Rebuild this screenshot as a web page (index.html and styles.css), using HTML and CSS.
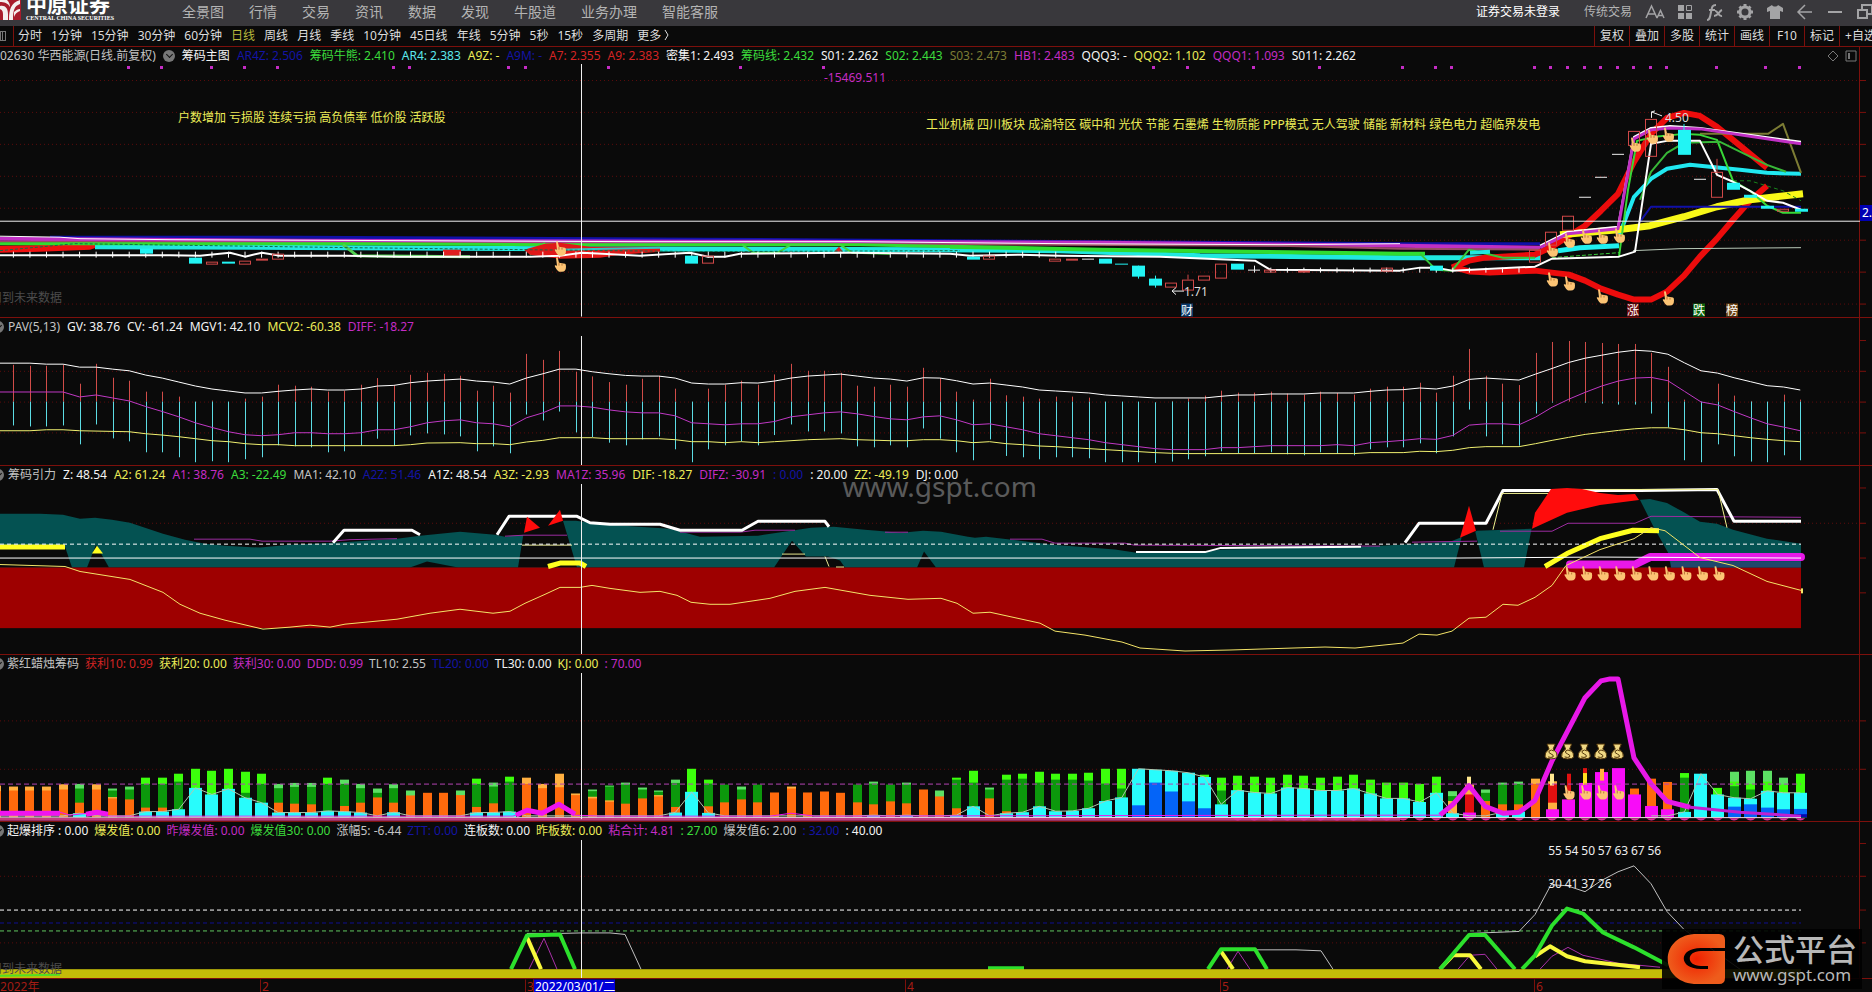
FILE: index.html
```html
<!DOCTYPE html>
<html lang="zh-CN">
<head>
	<meta charset="utf-8"/>
	<title>中原证券 - 华西能源</title>
	<link rel="stylesheet" href="styles.css">
</head>
<body>
	<header class="top">
		<div class="logo">
			<svg class="logo-mark" width="21" height="22" viewBox="0 0 21 22">
				<rect width="21" height="20" fill="#a81c2c"/>
				<path d="M0 6C5 5 8 8 8 14V20H3V15C3 11 2 10 0 9Z M9 20C9 9 11 3 20 0V4C14 6 13 11 13 20Z M0 0H7C9 2 10 4 10 7C8 3 4 2 0 2Z M14 12C16 10 18 9 20 9V11C17 12 15 14 14 17Z" fill="#f4eeee"/>
			</svg>
			<div class="logo-text">
				<strong>中原证券</strong>
				<small>CENTRAL CHINA SECURITIES</small>
			</div>
		</div>
		<nav class="menu">
			<button>全景图</button>
			<button>行情</button>
			<button>交易</button>
			<button>资讯</button>
			<button>数据</button>
			<button>发现</button>
			<button>牛股道</button>
			<button>业务办理</button>
			<button>智能客服</button>
		</nav>
		<div class="tools">
			<button class="login">证券交易未登录</button>
			<button class="trade">传统交易</button>
			<button class="ico" aria-label="字体"><svg width="20" height="18" viewBox="0 0 20 18"><path d="M1 15L6.500 3L12 15M3 11H10M12 15L15.500 7.500L19 15M13 12.500H18" stroke-width="1.500"/></svg></button>
			<button class="ico" aria-label="布局"><svg width="20" height="18" viewBox="0 0 20 18"><path class="fill" d="M3 2H9V8H3ZM3 10H9V16H3ZM11 10H17V16H11Z"/><path d="M11.500 2.500H16.500V7.500H11.500Z"/></svg></button>
			<button class="ico" aria-label="公式"><svg width="20" height="18" viewBox="0 0 20 18"><path d="M2 17C5 17 5 14 6 9C7 4 7 2 11 2M4 7H10M10 8C13 7 13 14 17 13M17 7C14 8 13 13 9 13" stroke-width="2"/></svg></button>
			<button class="ico" aria-label="设置"><svg width="20" height="18" viewBox="0 0 20 18"><circle cx="10" cy="9" r="5" stroke-width="3"/><path d="M10 1V4M10 14V17M2 9H5M15 9H18M4.500 3.500L6.500 5.500M13.500 12.500L15.500 14.500M4.500 14.500L6.500 12.500M13.500 5.500L15.500 3.500" stroke-width="3"/></svg></button>
			<button class="ico" aria-label="皮肤"><svg width="20" height="18" viewBox="0 0 20 18"><path class="fill" d="M7 2C8 4 12 4 13 2L18 5V9L15 8V16H5V8L2 9V5Z"/></svg></button>
			<button class="ico" aria-label="返回"><svg width="20" height="18" viewBox="0 0 20 18"><path d="M17 9H3M10 2L3 9L10 16" stroke-width="1.500"/></svg></button>
			<button class="ico" aria-label="最小化"><svg width="20" height="18" viewBox="0 0 20 18"><path d="M3 9H17" stroke-width="2"/></svg></button>
			<button class="ico" aria-label="还原"><svg width="20" height="18" viewBox="0 0 20 18"><path d="M3 7H12V15H3ZM7 7V2H17V11H12" stroke-width="2"/></svg></button>
		</div>
	</header>

	<div class="bar">
		<button class="side" aria-label="侧栏"><i></i></button>
		<div class="period">
			<button>分时</button>
			<button>1分钟</button>
			<button>15分钟</button>
			<button>30分钟</button>
			<button>60分钟</button>
			<button class="active">日线</button>
			<button>周线</button>
			<button>月线</button>
			<button>季线</button>
			<button>10分钟</button>
			<button>45日线</button>
			<button>年线</button>
			<button>5分钟</button>
			<button>5秒</button>
			<button>15秒</button>
			<button>多周期</button>
			<button>更多 <svg width="5" height="10" viewBox="0 0 5 10"><path d="M1 0L4 5L1 10" fill="none" stroke="#ddd"/></svg></button>
		</div>
		<div class="func">
			<button>复权</button>
			<button>叠加</button>
			<button>多股</button>
			<button>统计</button>
			<button>画线</button>
			<button>F10</button>
			<button>标记</button>
			<button>+自选</button>
		</div>
	</div>

	<main class="panels">
		<section class="panel p1">
			<div class="info">
				<span class="gy">02630 华西能源(日线.前复权)</span>
				<i class="drop"></i>
				<span class="w">筹码主图</span>
				<span class="b">AR4Z: 2.506</span>
				<span class="g">筹码牛熊: 2.410</span>
				<span class="c">AR4: 2.383</span>
				<span class="y">A9Z: -</span>
				<span class="b">A9M: -</span>
				<span class="r">A7: 2.355</span>
				<span class="r">A9: 2.383</span>
				<span class="w">密集1: 2.493</span>
				<span class="g">筹码线: 2.432</span>
				<span class="w">S01: 2.262</span>
				<span class="g">S02: 2.443</span>
				<span class="o">S03: 2.473</span>
				<span class="m">HB1: 2.483</span>
				<span class="w">QQQ3: -</span>
				<span class="y">QQQ2: 1.102</span>
				<span class="m">QQQ1: 1.093</span>
				<span class="w">S011: 2.262</span>
				<svg class="corner" width="30" height="12" viewBox="0 0 30 12"><path d="M6 1L11 6L6 11L1 6ZM19 1H29V11H19Z" fill="none" stroke="#777"/><path d="M21 3H23V9H21Z" fill="#777"/></svg>
			</div>
			<div class="plot"><svg id="main" viewBox="0 64 1872 253" preserveAspectRatio="none"></svg></div>
		</section>

		<section class="panel p2">
			<div class="info">
				<i class="drop half"></i>
				<span class="gy">PAV(5,13)</span>
				<span class="w">GV: 38.76</span>
				<span class="w">CV: -61.24</span>
				<span class="w">MGV1: 42.10</span>
				<span class="y">MCV2: -60.38</span>
				<span class="m">DIFF: -18.27</span>
			</div>
			<div class="plot"><svg id="pav" viewBox="0 335 1872 130" preserveAspectRatio="none"></svg></div>
		</section>

		<section class="panel p3">
			<div class="info">
				<i class="drop half"></i>
				<span class="gy">筹码引力</span>
				<span class="w">Z: 48.54</span>
				<span class="y">A2: 61.24</span>
				<span class="m">A1: 38.76</span>
				<span class="g">A3: -22.49</span>
				<span class="gy">MA1: 42.10</span>
				<span class="b">A2Z: 51.46</span>
				<span class="w">A1Z: 48.54</span>
				<span class="y">A3Z: -2.93</span>
				<span class="m">MA1Z: 35.96</span>
				<span class="y">DIF: -18.27</span>
				<span class="m">DIFZ: -30.91</span>
				<span class="b">: 0.00</span>
				<span class="w">: 20.00</span>
				<span class="y">ZZ: -49.19</span>
				<span class="w">DJ: 0.00</span>
			</div>
			<div class="plot"><svg id="force" viewBox="0 483 1872 171" preserveAspectRatio="none"></svg></div>
			<div class="mark">www.gspt.com</div>
		</section>

		<section class="panel p4">
			<div class="info">
				<i class="drop half"></i>
				<span class="gy">紫红蜡烛筹码</span>
				<span class="r">获利10: 0.99</span>
				<span class="y">获利20: 0.00</span>
				<span class="m">获利30: 0.00</span>
				<span class="m">DDD: 0.99</span>
				<span class="gy">TL10: 2.55</span>
				<span class="b">TL20: 0.00</span>
				<span class="w">TL30: 0.00</span>
				<span class="y">KJ: 0.00</span>
				<span class="m">: 70.00</span>
			</div>
			<div class="plot"><svg id="chip" viewBox="0 672 1872 150" preserveAspectRatio="none"></svg></div>
		</section>

		<section class="panel p5">
			<div class="info">
				<i class="drop half"></i>
				<span class="w">起爆排序 : 0.00</span>
				<span class="y">爆发值: 0.00</span>
				<span class="m">昨爆发值: 0.00</span>
				<span class="g">爆发值30: 0.00</span>
				<span class="gy">涨幅5: -6.44</span>
				<span class="b">ZTT: 0.00</span>
				<span class="w">连板数: 0.00</span>
				<span class="y">昨板数: 0.00</span>
				<span class="m">粘合计: 4.81</span>
				<span class="g">: 27.00</span>
				<span class="gy">爆发值6: 2.00</span>
				<span class="b">: 32.00</span>
				<span class="w">: 40.00</span>
			</div>
			<div class="plot"><svg id="burst" viewBox="0 840 1872 139" preserveAspectRatio="none"></svg></div>
		</section>
		<div class="dates" id="dates"></div>
	</main>

	<aside class="brand">
		<svg width="60" height="52" viewBox="0 0 60 52">
			<defs><radialGradient id="gb"><stop offset="0" stop-color="#f02000"/><stop offset="1" stop-color="#ee5c1c"/></radialGradient></defs>
			<path d="M28 1H53Q59 1 59 7V15H35C12 15 12 36 35 36H42V33H35C20 33 20 18 35 18H59V45Q59 51 53 51H28C-7 48 -7 4 28 1Z" fill="url(#gb)"/>
		</svg>
		<div>
			<strong>公式平台</strong>
			<span>www.gspt.com</span>
		</div>
	</aside>

<script src="chart.js"></script>
</body>
</html>
```
FILE: styles.css
```css
*{margin: 0;padding: 0;box-sizing: border-box;}
body{
	height: 100vh;
	display: flex;
	flex-direction: column;
	overflow: hidden;
	background: #0a0a0a;
	color: #ddd;
	font: 12px/18px "Noto Sans","Noto Sans CJK SC",sans-serif;
}
button{
	background: none;
	border: 0;
	color: inherit;
	font: inherit;
	white-space: nowrap;
	cursor: pointer;
}

/* 顶部菜单 */
.top{
	display: flex;
	align-items: center;
	height: 26px;
	flex: none;
	background: #39383c;
	overflow: hidden;
}
.logo{
	display: flex;
	gap: 5px;
	width: 182px;
	height: 26px;
}
.logo-text strong{
	display: block;
	height: 15px;
	font-size: 21px;
	line-height: 9px;
	color: #fff;
}
.logo-text small{
	display: block;
	font: bold 6px/6px "Liberation Serif",serif;
	color: #fff;
	white-space: nowrap;
}
.menu{
	display: flex;
	gap: 25px;
	margin-top: -3px;
	font-size: 14px;
	color: #b4b4b4;
}
.tools{
	display: flex;
	align-items: center;
	gap: 10px;
	margin: -3px -3px 0 auto;
}
.login{color: #fff;margin-right: 14px;}
.trade{color: #b4b4b4;margin-right: 3px;}
.ico{height: 18px;}
.ico svg{
	display: block;
	fill: none;
	stroke: #a4a4a6;
}
.ico .fill{fill: #a4a4a6;stroke: none;}

/* 周期栏 */
.bar{
	display: flex;
	height: 21px;
	flex: none;
	border-bottom: 1px solid #7c100c;
}
.side{
	width: 14px;
	border-right: 1px solid #7c100c;
	text-align: left;
}
.side i{
	display: block;
	width: 6px;
	height: 10px;
	border: 1px solid #777;
	border-left: 3px double #777;
}
.period{
	display: flex;
	gap: 9px;
	padding-left: 4px;
}
.period .active{color: #b8b83c;}
.func{
	display: flex;
	margin-left: auto;
	margin-right: -9px;
}
.func button{
	width: 35px;
	border-left: 1px solid #7c100c;
}
.func button:last-child{width: 42px;}

/* 图表区 */
.panels{
	flex: 1;
	display: flex;
	flex-direction: column;
	min-height: 0;
}
.panel{
	position: relative;
	display: flex;
	flex-direction: column;
	min-height: 0;
	border-bottom: 1px solid #7c100c;
	background: linear-gradient(#7c100c,#7c100c) right 12px top / 1px 100% no-repeat;
}
.p1{flex: 271 1 0;}
.p2{flex: 148 1 0;}
.p3{flex: 189 1 0;}
.p4{flex: 167 1 0;}
.p5{flex: 157 1 0;}
.info{
	display: flex;
	align-items: center;
	gap: 7px;
	height: 18px;
	flex: none;
	white-space: nowrap;
}
.p1 .info{height: 17px;}
.p4 .info,.p5 .info{gap: 6px;}
.corner{margin-left: auto;margin-right: 15px;}
.drop{
	position: relative;
	width: 12px;
	height: 12px;
	border-radius: 50%;
	background: #777;
}
.drop::after{
	content: "";
	position: absolute;
	left: 4px;
	top: 2px;
	width: 4px;
	height: 4px;
	border: solid #111;
	border-width: 0 1px 1px 0;
	transform: rotate(45deg);
}
.drop.half{margin: 0 -3px 0 -8px;}
.w{color: #f4f4f4;}
.gy{color: #c4c4c4;}
.b{color: #1414a4;}
.g{color: #3cdc3c;}
.c{color: #5ce8ec;}
.y{color: #ecec58;}
.r{color: #d42424;}
.o{color: #7c7c34;}
.m{color: #c42cc4;}

.plot{
	position: relative;
	flex: 1;
	min-height: 0;
}
.plot svg{
	position: absolute;
	left: 0;
	top: 0;
	width: 100%;
	height: 100%;
}
.plot path,.plot line{vector-effect: non-scaling-stroke;}
.lab,.dates span{
	position: absolute;
	transform: translateY(-50%);
	white-space: nowrap;
	line-height: 13px;
}
.lab.mid{transform: translate(-50%,-50%);}
.lab.gray{color: #4c4c4c;}
.lab.num{color: #eee;}
.lab.tag{color: #fff;}
.lab.cai{background: #0c3c6c;}
.lab.zhang{background: #6c0c0c;}
.lab.die{background: #0c640c;}
.lab.bang{background: #6c4414;}
.lab.price{background: #0000b4;color: #fff;line-height: 16px;padding: 0 2px;}

.mark{
	position: absolute;
	left: 45%;
	top: 3px;
	font-size: 28px;
	line-height: 34px;
	color: #909090;
	opacity: .6;
}

.dates{
	position: relative;
	flex: none;
	height: 13px;
	overflow: hidden;
	color: #a41c14;
}
.dates span{top: 50%;border-left: 1px solid #7c100c;padding-left: 1px;}
.dates span.now{background: #0000d8;color: #fff;}

.brand{
	position: absolute;
	right: 10px;
	bottom: 3px;
	display: flex;
	align-items: center;
	gap: 7px;
	width: 200px;
	height: 60px;
	padding-left: 4px;
	background: rgba(0,0,0,.9);
	color: #b8b8b8;
	white-space: nowrap;
}
.brand strong{
	display: block;
	font-size: 31px;
	line-height: 32px;
	font-weight: 500;
}
.brand span{
	display: block;
	font-size: 17px;
	line-height: 20px;
}
```
FILE: chart.js
```js
var NS = 'http://www.w3.org/2000/svg';

//第i根K线的x坐标
function X(i){
	return 13.4 + i * 16.545;
}
function add(svg, tag, attr){
	var el = document.createElementNS(NS, tag);
	for(var k in attr){
		el.setAttribute(k, attr[k]);
	}
	svg.appendChild(el);
	return el;
}
//折线 pts: "x,y x,y"
function line(svg, pts, color, w, dash){
	var a = {d:'M' + pts.trim().split(/\s+/).join('L'), fill:'none', stroke:color, 'stroke-width':w || 1, 'stroke-linejoin':'round'};
	if(dash) a['stroke-dasharray'] = dash;
	return add(svg, 'path', a);
}
function area(svg, pts, color){
	return add(svg, 'path', {d:'M' + pts.trim().split(/\s+/).join('L') + 'Z', fill:color});
}
function rect(svg, x, y, w, h, color){
	return add(svg, 'rect', {x:x, y:y, width:w, height:h, fill:color});
}
//每根K线一个值, 序列为 "i:v", 1px = 3个单位
function series(svg, str, y0, color){
	var pts = str.trim().split(/\s+/).map(function(s){
		var p = s.split(':');
		return X(+p[0]) + ',' + (y0 + p[1] / 3);
	});
	line(svg, pts.join(' '), color, 1);
}
function grid(svg, ys, ticks){
	ys.forEach(function(y){
		line(svg, '0,' + y + ' 1859,' + y, '#5c0c0c', 1, '1 3');
	});
	ys.concat(ticks || []).forEach(function(y){
		line(svg, '1860,' + y + ' 1866,' + y, '#7c100c', 1);
	});
}
function cross(svg, y1, y2){
	line(svg, '581.5,' + y1 + ' 581.5,' + y2, '#f0f0f0', 1);
}
function label(svg, x, y, text, cls){
	var vb = svg.viewBox.baseVal;
	var s = document.createElement('span');
	s.className = 'lab ' + (cls || '');
	s.textContent = text;
	s.style.left = x / vb.width * 100 + '%';
	s.style.top = (y - vb.y) / vb.height * 100 + '%';
	svg.parentNode.appendChild(s);
}
function hand(svg, x, y){
	var g = add(svg, 'g', {transform:'translate(' + (x - 5) + ',' + (y - 7) + ')'});
	add(g, 'path', {d:'M1 0Q3 -1 3 1L4 5L10 6Q11 6 11 9Q11 14 7 14H4Q2 13 0 9Q-1 7 2 8Z', fill:'#fcc474'});
	add(g, 'path', {d:'M4 5V8M7 6V8', fill:'none', stroke:'#b87838'});
}
function bag(svg, x, y){
	var g = add(svg, 'g', {transform:'translate(' + x + ',' + y + ')'});
	add(g, 'path', {d:'M-4 -8H4L2 -3Q7 1 6 5Q5 7 0 7Q-5 7 -6 5Q-7 1 -2 -3Z', fill:'#f0d884', stroke:'#54380c'});
	add(g, 'path', {d:'M3 -1Q0 -3 -2 -1Q-3 1 0 2Q3 3 2 5Q0 6 -3 5', fill:'none', stroke:'#54380c'});
}
//K线 空心为涨, 实心为跌
function candle(svg, x, y1, y2, up){
	if(up){
		add(svg, 'rect', {x:x - 5.5, y:y1 + .5, width:11, height:Math.max(1, y2 - y1 - 1), fill:'none', stroke:'#d04848'});
	}else{
		rect(svg, x - 6, y1, 13, y2 - y1, '#22f4f4');
	}
}

/*主图*/
(function(){
	var s = document.getElementById('main');
	grid(s, [80.5,112.5,144.5,176.5,208.5,240.5,272.5,304.5]);
	[128,161,211,244,277,393,409,508,525,608,740,823,1153,1187,1253,1319,1402,1435,1451,1534,1550,1567,1584,1600,1617,1633,1650,1666,1716,1765,1799].forEach(function(x){
		rect(s, x - 1, 66, 3, 3, '#c42cc4');
	});
	//均线带
	line(s, '50,237.5 300,237.5 700,239.5 1100,242 1400,244 1540,244', '#1010a8', 3);
	line(s, '0,239 300,241 700,242 1100,243 1400,246 1540,248', '#c030c4', 4);
	line(s, '0,242 300,243 700,244 1060,245 1280,246 1400,249 1540,250', '#9c4c64', 2);
	area(s, '0,246 60,245 105,245 90,250 40,252 0,253', '#f01010');
	line(s, '95,247 350,248 560,249 940,250 1060,251 1200,256 1400,258 1540,258', '#20e8e0', 5);
	line(s, '0,244 350,244 560,245 860,245 960,247', '#30dc30', 3);
	line(s, '950,247 1100,250 1250,252 1400,254 1425,254', '#30dc30', 4);
	line(s, '343,245 357,256 470,257', '#50d050', 3);
	line(s, '530,255 545,243', '#40d840', 2);
	line(s, '742,245 753,253 778,253 791,245 840,245 852,253 890,254', '#40d840', 2);
	area(s, '524,250 545,244 560,243 590,247 660,247 660,252 620,255 600,258 560,259 530,255', '#e01818');
	line(s, '560,250 605,249 660,248', '#30c8c8', 2);
	rect(s, 443, 250, 18, 6, '#e02020');
	area(s, '834,252 839,247 843,252', '#e02020');
	line(s, '0,236.5 60,237.5 80,239 170,240 410,241 640,242 860,242 1060,244 1280,245 1400,244', '#fff', 1);
	line(s, '0,251 75,244 350,248 700,252 960,251', '#106c48', 1, '3 2');
	//起涨后
	line(s, '1452,268 1469,261 1485,258 1535,255 1552,247 1569,236 1585,226 1601,211 1618,194 1634,162 1651,134 1667,118 1684,113 1700,116 1717,127 1733,140 1750,154 1767,168', '#ec0c0c', 6);
	line(s, '1452,267 1470,272 1490,273 1535,271 1552,273 1569,275 1585,281 1601,289 1618,295 1634,300 1651,300 1667,292 1684,276 1700,257 1717,239 1733,220 1750,201 1767,186', '#ec0c0c', 6);
	line(s, '1420,254 1436,270 1452,271 1469,250 1503,258 1535,258', '#38c838', 2);
	line(s, '1470,253 1490,252', '#20e8e0', 4);
	line(s, '1633,251 1680,249 1801,248', '#b8c8b8', 1);
	line(s, '1552,258 1619,253', '#38c838', 1, '4 2');
	line(s, '1558,251 1580,248 1619,246', '#20f0f0', 5);
	line(s, '1619,236 1634,197 1651,179 1667,169 1690,165 1720,168 1740,170 1767,173 1801,174', '#20e8f0', 4);
	line(s, '1560,235 1618,230 1650,226 1684,217 1717,207 1750,200 1803,194', '#f8f818', 7);
	line(s, '1640,222 1651,207 1801,207', '#1010a8', 2);
	line(s, '1700,134 1768,134 1783,124 1801,173', '#7c7c34', 2);
	line(s, '1619,257 1628,190 1637,141 1655,137 1684,134 1700,135 1717,140 1733,181 1750,191 1767,206 1783,213 1801,213', '#38d838', 2);
	line(s, '1640,200 1651,172 1667,153 1684,143 1720,142 1767,165 1786,172', '#38b838', 2);
	line(s, '1733,181 1750,181 1783,191 1801,201', '#18841c', 1, '4 3');
	line(s, '1540,246 1568,232 1618,227 1634,137 1651,128 1670,126 1700,128 1801,142', '#fff', 2);
	line(s, '1540,248 1568,234 1618,229 1634,139 1651,130 1670,128 1700,129 1801,144', '#c030c4', 3);
	line(s, '0,255.5 170,255.5 200,256 230,253 245,257 262,253 280,256 345,256 400,257 530,257 560,256 582,253 640,256 690,253 708,257 725,257 740,254 850,253 950,254 970,256 1020,255 1060,256 1160,257 1255,261 1270,270 1400,271 1420,268 1436,268 1452,271 1535,267 1552,259 1619,257 1635,252 1651,144 1667,141 1700,141 1717,175 1733,182 1750,191 1767,201 1783,203 1801,210', '#fff', 2);
	for(var i = 0; i < 64; i++){
		line(s, X(i) + ',252 ' + X(i) + ',258', '#fff', 1);
	}
	for(i = 76; i < 92; i++){
		line(s, X(i) + ',268 ' + X(i) + ',273', '#fff', 1);
	}
	//K线
	[[146,249,254,0],[195,258,264,0],[212,262,265,1],[228,262,264,0],[245,261,265,1],[262,259,261,1],[278,254,260,1],[691,256,264,0],[708,256,264,1],
	[973,257,260,0],[989,256,260,1],[1055,259,262,1],[1072,259,261,1],[1105,259,264,0],[1138,266,277,0],[1155,279,286,0],[1171,283,288,1],[1188,280,291,1],
	[1204,276,281,1],[1221,264,279,1],[1237,264,270,0],[1270,270,273,1],[1304,271,273,1],[1387,268,272,1],[1436,266,271,0],[1535,250,263,1],[1551,232,246,1],[1568,216,231,1],[1634,131,146,1],[1651,119,157,1],
	[1684,130,155,0],[1717,172,198,1],[1733,183,190,0],[1750,195,198,0],[1767,206,209,0],[1783,209,212,1],[1801,209,212,0]].forEach(function(k){
		candle(s, k[0], k[1], k[2], k[3]);
	});
	line(s, '1138.5,266 1138.5,279', '#22f4f4', 1);
	line(s, '1155.5,276 1155.5,288', '#22f4f4', 1);
	line(s, '1717,159 1717,172', '#d04848', 1);
	line(s, '1188,275 1188,280', '#d04848', 1);
	line(s, '1684,124 1684,131', '#22f4f4', 1);
	['1612,154.5 1624,154.5','1595,177.5 1607,177.5','1579,197.5 1591,197.5','1694,179.5 1706,179.5','1082,259.5 1094,259.5','1248,270.5 1260,270.5','1254.5,266 1254.5,273','1651.5,112 1662,116','1651.5,118 1651.5,112 1655,111','1172,291.5 1184,291.5','1176,288 1172,291.5 1176,295'].forEach(function(p){
		line(s, p, '#eee', 1);
	});
	line(s, '1115,264.5 1128,264.5', '#22f4f4', 1);
	[[560,249],[560,265],[1552,250],[1569,241],[1586,237],[1602,237],[1619,236],[1635,145],[1652,137],[1668,135],[1552,280],[1569,284],[1602,297],[1668,299]].forEach(function(p){
		hand(s, p[0], p[1]);
	});
	line(s, '0,221.5 1860,221.5', '#f0f0f0', 1);
	cross(s, 64, 317);

	label(s, 824, 77, '-15469.511', 'm');
	label(s, 178, 117, '户数增加 亏损股 连续亏损 高负债率 低价股 活跃股', 'y');
	label(s, 926, 124, '工业机械 四川板块 成渝特区 碳中和 光伏 节能 石墨烯 生物质能 PPP模式 无人驾驶 储能 新材料 绿色电力 超临界发电', 'y');
	label(s, 1665, 117, '4.50');
	label(s, 1184, 291, '1.71');
	label(s, 1181, 310, '财', 'tag cai');
	label(s, 1627, 310, '涨', 'tag zhang');
	label(s, 1693, 310, '跌', 'tag die');
	label(s, 1726, 310, '榜', 'tag bang');
	label(s, -10, 297, '用到未来数据', 'gray');
	label(s, 1860, 213, '2.8', 'price');
})();

/*PAV*/
(function(){
	var s = document.getElementById('pav');
	grid(s, [370.5,401.5,432.5], [339.5]);
	var top = [432,435,435,432,489,429,471,480,513,513,528,543,540,543,534,528,492,495,498,513,510,492,472,494,462,456,459,465,510,495,516,399,417,390,453,467,484,492,474,465,504,543,
	504,492,480,492,461,429,450,450,456,495,498,492,498,441,472,513,537,474,524,528,534,528,528,531,543,543,543,545,541,534,525,510,516,516,513,519,522,513,517,522,504,498,
	498,486,516,465,384,465,489,493,396,363,360,363,366,369,369,396,438,537,543,489,525,541,543,522,537];
	top.forEach(function(v, i){
		var x = Math.round(X(i)), y = 220 + v / 3, mid = 401;
		if(y < mid) rect(s, x, y, 1, mid - y, '#d04c48');
		if(y + 61 > mid) rect(s, x, Math.max(y, mid), 1, y + 61 - Math.max(y, mid), '#5cdce4');
	});
	series(s, '-1:427 1:427 2:430 3:430 4:439 5:439 6:445 7:450 8:463 9:472 10:484 11:496 12:505 13:511 14:517 15:517 16:512 17:508 18:505 19:508 20:508 21:505 22:496 23:494 24:486 25:481 26:478 27:475 28:481 29:484 30:490 31:472 32:459 33:445 34:445 35:453 36:459 37:464 38:466 39:466 40:472 41:487 42:490 43:490 44:486 45:487 46:481 47:472 48:466 49:463 50:460 51:466 52:472 53:475 54:481 55:471 56:472 57:480 58:490 59:487 60:493 61:499 62:508 63:511 64:514 65:517 66:523 67:526 68:529 69:532 72:532 73:527 74:523 75:523 76:520 78:520 79:517 81:517 82:512 83:508 84:507 85:502 86:505 87:496 88:476 89:472 90:475 91:478 92:460 93:443 94:425 95:412 96:403 97:394 98:388 99:391 100:400 101:426 102:450 103:457 104:471 105:483 106:495 107:499 108:508', 220, '#fff');
	series(s, '-1:514 3:514 4:529 5:523 6:532 7:541 8:558 9:573 10:589 11:607 12:621 13:634 14:643 15:646 16:643 17:637 18:637 19:640 20:640 21:637 22:628 23:628 24:619 25:607 26:601 27:598 28:607 29:610 30:619 31:592 32:577 33:556 34:556 35:560 36:568 37:574 38:577 39:577 40:586 41:607 42:610 43:613 44:610 45:610 46:603 47:589 48:583 49:577 50:574 51:580 52:588 53:595 54:598 55:589 56:586 57:598 58:613 59:610 60:619 61:628 62:640 63:646 64:652 65:658 66:667 67:673 68:679 69:685 70:688 72:688 73:682 74:682 75:679 76:676 79:676 80:673 81:676 82:667 83:664 84:660 85:655 86:657 87:645 88:614 89:610 90:610 91:613 92:590 93:560 94:536 95:515 96:496 97:481 98:472 99:470 100:480 101:512 102:544 103:553 104:573 105:592 106:610 107:620 108:631', 220, '#c038c4');
	series(s, '-1:631 1:631 2:628 3:628 4:631 7:634 8:640 9:644 10:649 11:655 12:661 13:664 14:670 15:673 16:673 17:676 23:676 24:673 25:668 27:667 28:670 29:670 30:673 31:665 32:660 33:652 35:652 36:655 39:655 40:658 41:664 42:664 43:667 44:664 45:667 46:664 47:661 48:658 50:655 51:658 53:661 54:661 55:658 56:658 57:661 58:667 59:664 60:670 61:673 62:677 63:679 64:682 65:685 66:688 67:691 68:694 69:697 70:699 71:700 81:700 82:697 84:697 85:693 86:694 87:690 88:682 89:679 91:679 92:670 93:660 94:651 95:642 96:636 97:630 98:625 99:622 100:622 101:628 102:637 103:640 104:646 105:652 106:657 107:661 108:664', 220, '#f0f070');
	cross(s, 335, 465);
})();

/*筹码引力*/
(function(){
	var s = document.getElementById('force'), bg = '#0a0a0a';
	grid(s, [522.5], [487,557.5,592.5]);
	area(s, '0,513 40,513 63,514 80,518 95,517 112,519 130,522 145,527 163,533 185,539 205,543 225,545 260,547 290,544 335,542 397,538 420,535 460,531 495,534 505,536 563,520 576,520 598,523 638,526 670,528 700,536 758,535 791,530 811,527 834,526 865,529 901,532 923,530 941,531 968,536 975,537 986,536 1012,539 1053,544 1115,549 1135,552 1195,552 1222,549 1361,546 1400,544 1450,541 1460,537 1471,533 1477,530 1531,528 1638,499 1650,498 1667,502 1683,511 1700,521 1717,523 1733,529 1767,538 1801,543 1801,567 0,567', '#045252');
	area(s, '0,546 65,546 72,567 0,567', bg);
	area(s, '87,567 96,544 109,567', bg);
	area(s, '505,536 540,515 563,520 541,530 524,534', bg);
	area(s, '518,567 524,530 541,528 563,520 577,567', bg);
	area(s, '410,567 427,561 458,567', bg);
	area(s, '774,567 792,540 806,556 828,556 840,560 845,567', bg);
	area(s, '917,567 924,551 936,567', bg);
	area(s, '1454,567 1462,535 1475,530 1484,567', bg);
	area(s, '1524,567 1532,526 1590,500 1639,497 1653,525 1668,552 1671,567', bg);
	rect(s, 0, 567, 1801, 61, '#9e0000');
	line(s, '194,538.5 250,538.5 262,540.5 330,540.5 350,539 397,538', '#9c2ca0', 1);
	line(s, '505,535.5 524,534.5 567,534.5', '#9c2ca0', 1);
	line(s, '680,531.5 740,531.5 755,529.5 795,529.5', '#9c2ca0', 1);
	line(s, '885,531.5 908,531.5', '#9c2ca0', 1);
	line(s, '1010,538.5 1042,538.5 1055,542.5 1125,542.5 1134,544.5 1380,545.5', '#9c2ca0', 1);
	line(s, '1412,541.5 1477,540.5', '#9c2ca0', 1);
	line(s, '1500,530.5 1552,530.5 1568,522.5 1635,522.5 1651,515.5 1801,516.5', '#9c2ca0', 1);
	line(s, '333,542 344,529.5 412,529.5 420,534', '#fff', 3);
	line(s, '497,534 509,515.5 577,515.5 590,522 610,523.5 660,523.5 680,529.5 742,529.5 758,520.5 825,520.5 829,526', '#fff', 3);
	line(s, '1136,551.5 1205,551.5 1220,547.5 1361,546', '#fff', 2);
	line(s, '1405,542 1419,522.5 1486,522.5 1503,489.5 1640,489.5 1717,488.5 1734,520.5 1801,520.5', '#fff', 3);
	line(s, '1493,529 1502,492.5 1550,492.5', '#f0f090', 1);
	line(s, '1573,488.5 1718,488.5 1727,527', '#f0f090', 1);
	area(s, '524,532 527,516 540,527', '#ff0c0c');
	area(s, '548,525 560,509 563,520', '#ff0c0c');
	area(s, '1460,537 1469,505 1476,530', '#ff0c0c');
	area(s, '1532,528 1535,512 1551,488 1567,487 1582,488 1600,492 1618,494 1635,493 1639,499 1600,504 1567,512', '#ff0c0c');
	line(s, '0,546.5 65,546.5', '#ffff20', 5);
	area(s, '92,553 97,545 103,553', '#ffff20');
	line(s, '522,544.5 572,544.5', '#f0f0a0', 1);
	line(s, '782,553.5 805,553.5M825,556L829,566M836,566.5L844,566.5', '#e8e890', 1);
	line(s, '548,566 560,562.5 580,562.5 586,566', '#ffff20', 5);
	line(s, '1545,566 1567,553 1600,538 1633,529.5 1659,530', '#ffff20', 5);
	rect(s, 1671, 561, 130, 6, '#20486c');
	line(s, '1570,564 1635,564 1650,556.5 1801,556.5', '#e818e8', 8).setAttribute('stroke-linecap', 'round');
	line(s, '0,543.5 1801,543.5', '#fff', 1, '4 3');
	line(s, '0,557.5 1455,557.5 1600,556.5 1801,557.5', '#fff', 1);
	line(s, '0,564 65,566 80,571 130,579 163,592 180,604 200,613 225,620 263,629 290,627 310,625 330,627 345,624 397,619 430,613 460,609 493,613 510,611 525,603 545,594 560,587 580,587 592,585 610,588 640,592 660,591 677,595 691,602 710,604 730,604 770,598 795,591 825,587 870,595 908,599 941,598 957,603 973,613 990,612 1040,623 1055,631 1085,635 1122,642 1140,648 1185,651 1230,650 1325,647 1355,648 1403,643 1419,634 1437,635 1452,631 1469,618 1486,617 1503,604 1518,605 1535,597 1552,585 1566,565 1600,549 1634,538 1651,527 1665,530 1700,557 1733,565 1767,581 1801,590', '#f4e468', 1);
	for(var i = 94; i < 104; i++){
		hand(s, X(i) + 1, 573);
	}
	rect(s, 1801, 588, 2, 5, '#f4e468');
	cross(s, 483, 654);
})();

/*紫红蜡烛筹码*/
(function(){
	var s = document.getElementById('chip');
	var colors = {O:'#ff6a0c', A:'#ffb040', G:'#0c980c', L:'#3cff0c', P:'#5ce064', C:'#28fcfc', B:'#0464f8', N:'#0808b0', M:'#f80cf8', R:'#e01010'};
	//从上到下: 颜色+顶部位置
	var bars = ['A408 O425','A411 O423','A411 O423','A411 O423','A404 O420','P403 G417 O460 C492','A404 O420','P417 G423 A443 O447','P411 G420 O450','L384 G403 O475 C487','L384 G403 O475 C487','L372 G396 C480','L357 C415','L363 C435','L357 C418','L366 G430 C445','L372 G403 C460','P403 G416 O460 C490','P400 G412 O463 C490','P400 G412 O465 C490','L384 G403 C485','P390 G403 O470 C487','P403 G416 O460 C490','P417 G430 O444','P404 G416 O460 C489','P423 O438','O430','O430','P423 O437','L387 G403 O473 C490','P399 G411 O462 C490','L381 G396 C487','A384 O403','A403 O416','A372 O413','A432 O437','P420 G425 A442 O447','P408 G411 A453 O457','P399 G405 O463','P414 G420 O447','P423 G427 A437 O441','P390 G400 O473 C490','L357 C427',
	'L390 G402 O471 C491','G405 O459','P411 G420 O450','G405 O459','O429','A411 O417','O429','O426','O430','G405 O459','P396 G402 O465 C498','G405 O456','P399 G405 O462 C498','O420','P423 O441','L384 G390 O477 C498','L363 G399 C471','P414 G420 O447','L375 G390 O486 C492','L372 G387 C489','L366 G399 C471','L372 G390 C486','L372 G390 C485','L369 G393 C477','L357 G402 C455','L357 G417 C444','C357 B468','C360 B399','C363 B426','C369 B456','L375 C382 B477','L384 G423 C465','L378 C422','L381 C429','L384 C432','L375 C414','L378 C417','L384 C423','L381 C423','L375 C417','L390 C432','L399 C447',
	'L399 C447','L403 C458','L381 C430','P425 G440 A455 C492','A405 R435 M490','P420 G430 O455','P399 G405 O465 C489','P396 G403 O465 C487','A387 O403','A395 R403 A460 M480','M450','M400','M367','M355','O417 M435','O387 M470','O397 M480','L370 G384 C488','C372','L415 C435','P366 L396 G410 C445 B472','P363 L403 G420 C448 B465','P363 L396 C424 B475','P384 L405 C430 B480','L372 C430 B479 N495'];
	grid(s, [720.5,769.5], [671.5]);
	var gray = [];
	bars.forEach(function(b, n){
		var x = X(n - 1), c = 500;
		b.split(' ').forEach(function(seg){
			var k = seg.charAt(0), v = +seg.slice(1), y = 650 + v / 3;
			var w = 'CBNM'.indexOf(k) > -1 ? 13 : 9;
			if(k == 'C') c = v;
			rect(s, Math.round(x - w / 2), y, w, 818 - y, colors[k]);
		});
		gray.push(x + ',' + (650 + c / 3));
	});
	//细烛芯
	[[88,381,'#ffe890'],[93,372,'#ffe890'],[94,372,'#e01010'],[95,355,'#e01010'],[95,370,'#ffe020'],[96,357,'#ffb040']].forEach(function(k){
		rect(s, Math.round(X(k[0])) - 2, 650 + k[1] / 3, 4, k[0] == 94 ? 26 : 12, k[2]);
	});
	line(s, gray.slice(0, 93).join(' '), '#b0c8b0', 1);
	line(s, gray.slice(100).join(' '), '#b0c8b0', 1);
	line(s, '0,814 60,813 70,816 97,813 110,817 513,817 527,811 542,814 559,805 575,816 600,817 770,817 791,814 815,817 1330,816 1440,816', '#f014f0', 1);
	line(s, '0,814 60,814M86,815L97,813L108,815M516,816L527,811L542,814L559,805L575,815', '#f014f0', 5);
	line(s, '1440,816 1453,805 1469,786 1485,807 1503,814 1519,813 1535,801 1552,761 1585,697 1601,680 1610,678 1618,678 1634,758 1651,784 1667,802 1690,808', '#e818e8', 5);
	line(s, '1690,808 1740,813 1801,817', '#c020d0', 3);
	line(s, '0,820 1400,820', '#c03c80', 3);
	line(s, '0,818 1801,818.5', '#f4dce8', 1);
	for(var i = 74; i < 109; i++){
		add(s, 'path', {d:'M' + (X(i) - 5) + ' 819H' + (X(i) + 5) + 'Q' + X(i) + ' 824 ' + (X(i) - 5) + ' 819', fill:'#e030a0'});
	}
	line(s, '0,784.5 1801,784.5', '#b444b4', 1, '5 3');
	for(i = 93; i < 98; i++){
		bag(s, X(i) - 1, 752);
		if(i > 93) hand(s, X(i), 793);
	}
	cross(s, 672, 820);
})();

/*起爆排序*/
(function(){
	var s = document.getElementById('burst');
	label(s, -10, 969, '用到未来数据', 'gray');
	grid(s, [876.5,943.5], [843.5,910.5]);
	line(s, '0,910.5 1801,910.5', '#fff', 1, '4 3');
	line(s, '0,923.5 1801,923.5', '#101090', 1, '4 3');
	line(s, '0,931.5 1801,931.5', '#60c860', 1, '4 3');
	//灰线
	['527,934 560,934 581,933.5 610,933.5 625,935 641,970','1221,950.5 1296,950.5 1321,951.5 1333,970','1469,934 1519,932 1535,915 1551,885 1567,886 1585,892 1601,881 1618,872 1634,866 1651,884 1667,912 1684,930 1740,970'].forEach(function(p){
		line(s, p, '#c0c0c0', 1);
	});
	['529,970 544,939 557,970','1227,970 1238,952 1250,970','1458,970 1470,956 1485,955 1497,970','1540,970 1552,957 1568,948 1583,956 1618,964 1660,968'].forEach(function(p){
		line(s, p, '#a830a8', 1);
	});
	['527,938 541,970','1221,952 1233,970','1440,970 1453,956 1470,956 1481,970','1535,957 1550,947 1567,957 1585,962 1640,968'].forEach(function(p){
		line(s, p, '#f8f83c', 4);
	});
	['511,970 527,936 560,935 575,970','988,969 1024,969','1208,970 1221,950 1255,950 1267,970','1440,970 1469,935.5 1485,935.5 1515,970','1522,970 1535,956 1552,926 1567,909 1583,914 1603,933 1634,948 1668,966'].forEach(function(p){
		line(s, p, '#2ce02c', 4);
	});
	rect(s, 0, 970, 1801, 9, '#c4bc08');
	line(s, '0,976.5 60,975.5', '#50e020', 2);
	'55 54 50 57 63 67 56'.split(' ').forEach(function(t, i){
		label(s, X(93 + i) + 3, 850, t, 'num mid');
	});
	'30 41 37 26'.split(' ').forEach(function(t, i){
		label(s, X(93 + i) + 3, 883, t, 'num mid');
	});
	cross(s, 840, 979);

	//日期轴
	var box = document.getElementById('dates');
	[[-2,'2022年'],[260,'2'],[525,'3'],[533,'2022/03/01/二','now'],[905,'4'],[1220,'5'],[1534,'6']].forEach(function(d){
		var t = document.createElement('span');
		t.textContent = d[1];
		if(d[2]) t.className = d[2];
		t.style.left = d[0] / 18.72 + '%';
		box.appendChild(t);
	});
})();
```
